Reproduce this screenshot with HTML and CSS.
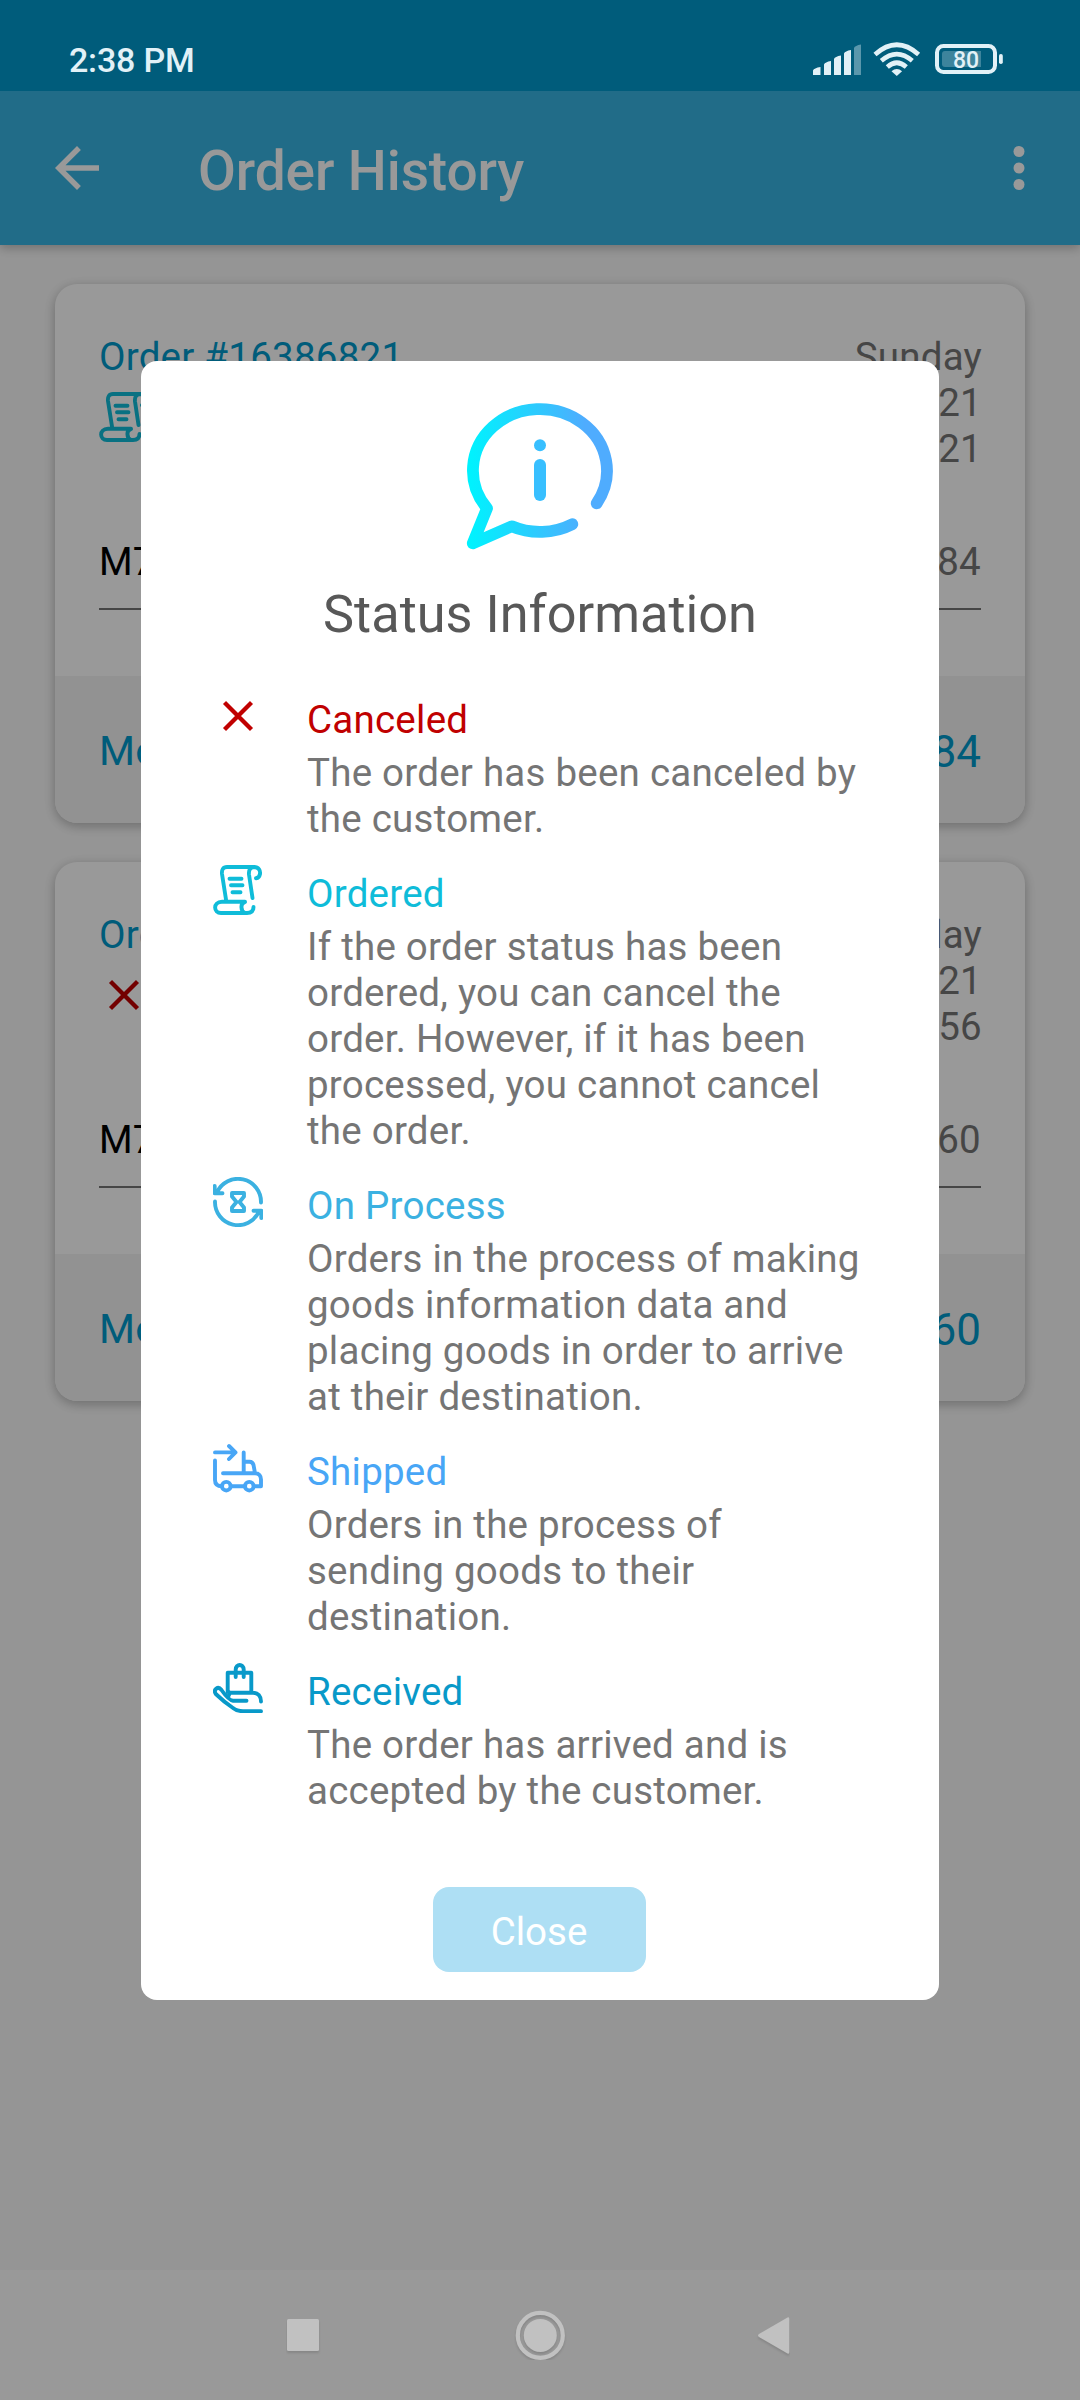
FILE: index.html
```html
<!DOCTYPE html>
<html lang="en">
<head>
<meta charset="utf-8">
<title>Order History</title>
<link rel="stylesheet" href="styles.css">
</head>
<body>
<svg class="defs" width="0" height="0" aria-hidden="true">
  <symbol id="cross" viewBox="0 0 50 50">
    <path stroke-linecap="butt" stroke-width="4.300" d="M11.500 11.500L38.500 38.500M38.500 11.500L11.500 38.500"/>
  </symbol>
  <symbol id="scroll" viewBox="0 0 50 50">
    <path d="M13 34.500L9 9C8.500 5 10 2 14 2H41C46 2 47.500 6 47 9C46.500 11.500 45 13 43 13.300M42 2C37 2 35.500 5 36 9.500L39.500 33M16.500 13.700H28.500M18 20.300H29.500M19.500 27.300H27.500M32 36.800H9C-.500 37 .500 48 8 48H34C38.500 48 40.500 46 40.500 42M32 37C27 38 27.500 46 32 48"/>
  </symbol>
  <symbol id="process" viewBox="0 0 50 50">
    <path d="M4 15.500A23 23 0 0 1 48 25.500M1.700 9V16.300H9.500M2 24.500A23 23 0 0 0 46 34.500M48.300 41V33.700H40.500M19 16H31V19.500L26.500 25L31 30.500V34H19V30.500L23.500 25L19 19.500Z"/>
  </symbol>
  <symbol id="truck" viewBox="0 0 50 50">
    <path d="M2 9.400H22M16 3L22.500 9.400L16 16M2 17.500V37C2 41 4 43.200 9 43.200M30.700 9.500V30M31 18.700H36.500C39 18.700 40 20 40.500 22L42 30M10 30.300H42C46 30.300 48 33 48 36.500V43.200H41.500M18 43.200H32"/>
    <circle cx="13.300" cy="43.200" r="4.300"/><circle cx="36.300" cy="43.200" r="4.300"/>
  </symbol>
  <symbol id="received" viewBox="0 0 50 50">
    <path d="M14.700 29V9.800H38.300V29M22.700 14V6.500C22.700 .500 30.700 .500 30.700 6.500V14M17 29.700H40C45 29.700 48 33 48 38.500M33.500 37.700H20C17 37.500 12 32 8.500 27C5 22.500 0 26.500 2.800 31C8 36 14 41 20 45C23 47.500 26 48.200 30 48.200H48M17 29.700L15 34"/>
  </symbol>
</svg>

<div class="screen">
  <header class="status-bar">
    <span class="clock">2:38 PM</span>
    <svg class="status-icons" width="194" height="36" viewBox="811 41 194 36">
      <g fill="#e2f1f7">
        <path d="M813 75V70.500Q814 68 820.500 67V75ZM824 75V64.500Q825 62 831 61V75ZM834 75V59Q835 56.500 841 55.500V75ZM844 75V53.500Q845 51 851 50V75Z"/>
        <path opacity=".4" d="M854 75V48Q855 45.500 861 44.500V75Z"/>
        <path d="M896.800 76L891.500 71.300Q896.800 66.500 902.100 71.300Z"/>
      </g>
      <g fill="none" stroke="#e2f1f7" stroke-width="4.600">
        <path d="M875 54.500Q896.800 35 918.600 54.500M881.300 60.800Q896.800 47.500 912.300 60.800M887.300 67Q896.800 58.500 906.300 67"/>
        <rect x="937" y="46" width="58" height="26" rx="6.500" stroke-width="4"/>
      </g>
      <rect x="999" y="54" width="3.800" height="10" rx="1.800" fill="#e2f1f7"/>
      <path d="M945 51H981V67H945Q942 67 942 64V54Q942 51 945 51Z" fill="#e2f1f7" opacity=".27"/>
      <text class="battery-level" x="966" y="68.200">80</text>
    </svg>
  </header>

  <div class="app-bar">
    <svg class="bar-icon" viewBox="0 0 24 24"><path d="M20 11H7.830l5.590-5.590L12 4l-8 8 8 8 1.410-1.410L7.830 13H20z"/></svg>
    <h1>Order History</h1>
    <svg class="bar-icon" viewBox="0 0 24 24"><circle cx="12" cy="6" r="2"/><circle cx="12" cy="12" r="2"/><circle cx="12" cy="18" r="2"/></svg>
  </div>

  <main class="orders">
    <article class="card">
      <div class="card-body">
        <div class="card-head">
          <div><div class="order-no">Order #16386821</div><svg class="icon ordered"><use href="#scroll"/></svg></div>
          <div class="date">Sunday<br>21<br>21</div>
        </div>
        <div class="item"><span class="sku">M7</span><span>84</span></div>
      </div>
      <footer class="card-foot"><span>Mo</span><span class="total">84</span></footer>
    </article>
    <article class="card">
      <div class="card-body">
        <div class="card-head">
          <div><div class="order-no">Ord</div><svg class="icon canceled"><use href="#cross"/></svg></div>
          <div class="date">day<br>21<br>56</div>
        </div>
        <div class="item"><span class="sku">M7</span><span>60</span></div>
      </div>
      <footer class="card-foot"><span>Mo</span><span class="total">60</span></footer>
    </article>
  </main>

  <nav class="nav-bar">
    <svg width="504" height="50" viewBox="286 2310 504 50">
      <g class="nav-shapes">
        <rect x="287" y="2319" width="32" height="32" rx="1.500"/>
        <circle cx="540.300" cy="2335.400" r="16.500"/>
        <circle cx="540.300" cy="2335.400" r="22.500" fill="none" stroke="#c1c1c1" stroke-width="4.200"/>
        <path d="M787.500 2317.500Q789.300 2316.500 789.300 2319V2352Q789.300 2354.500 787.500 2353.500L759 2337Q757 2335.500 759 2334Z"/>
      </g>
    </svg>
  </nav>

  <div class="scrim">
    <section class="dialog">
      <svg class="info" viewBox="0 0 146 146">
        <defs><linearGradient id="glow" gradientUnits="userSpaceOnUse" x1="4" y1="0" x2="118" y2="0"><stop offset="0" stop-color="#00f2fe"/><stop offset="1" stop-color="#4facfe"/></linearGradient></defs>
        <path d="M105.300 121.200A67 61.500 0 0 1 44.700 123.300L5.800 140.300L20 105.300A67 61.500 0 1 1 129.700 100.300" fill="none" stroke="url(#glow)" stroke-width="11.800" stroke-linecap="round" stroke-linejoin="round"/>
        <circle cx="73" cy="42.300" r="6" fill="#38bfff"/>
        <rect x="67" y="56" width="12" height="42" rx="6" fill="#38bfff"/>
      </svg>
      <h2>Status Information</h2>
      <ul class="statuses">
        <li class="canceled"><svg class="icon"><use href="#cross"/></svg><div><h3>Canceled</h3><p>The order has been canceled by the customer.</p></div></li>
        <li class="ordered"><svg class="icon"><use href="#scroll"/></svg><div><h3>Ordered</h3><p>If the order status has been ordered, you can cancel the order. However, if it has been processed, you cannot cancel the order.</p></div></li>
        <li class="processing"><svg class="icon"><use href="#process"/></svg><div><h3>On Process</h3><p>Orders in the process of making goods information data and placing goods in order to arrive at their destination.</p></div></li>
        <li class="shipped"><svg class="icon"><use href="#truck"/></svg><div><h3>Shipped</h3><p>Orders in the process of sending goods to their destination.</p></div></li>
        <li class="received"><svg class="icon"><use href="#received"/></svg><div><h3>Received</h3><p>The order has arrived and is accepted by the customer.</p></div></li>
      </ul>
      <button class="close" type="button">Close</button>
    </section>
  </div>
</div>
</body>
</html>
```
FILE: styles.css
```css
* { box-sizing: border-box; margin: 0; padding: 0; }

body {
  width: 1080px;
  font-family: Roboto, sans-serif;
  font-size: 38.5px;
  line-height: 46px;
  letter-spacing: .24px;
  color: #757575;
}

.defs { position: absolute; }

.screen {
  position: relative;
  display: flex;
  flex-direction: column;
  height: 2400px;
  overflow: hidden;
  background: #f9f9f9;
}

/* system bars sit above the scrim */
.status-bar {
  position: relative;
  z-index: 2;
  display: flex;
  justify-content: space-between;
  height: 91px;
  padding: 41px 75px 0 69px;
  background: #005c7b;
}
.clock {
  font-size: 34px;
  font-weight: 500;
  line-height: 38px;
  letter-spacing: -.2px;
  color: #e2f1f7;
}
.battery-level {
  font-size: 23px;
  font-weight: 500;
  letter-spacing: 0;
  text-anchor: middle;
  fill: #e2f1f7;
}

.app-bar {
  display: flex;
  align-items: center;
  height: 154px;
  padding: 0 28px 0 44px;
  background: #37b4e3;
  box-shadow: 0 3px 10px rgba(0, 0, 0, .25);
  z-index: 0;
}
.bar-icon { width: 66px; height: 66px; fill: #fff; }
.app-bar h1 {
  flex: 1;
  margin-left: 88px;
  padding-top: 5px;
  font-size: 55px;
  font-weight: 500;
  line-height: 66px;
  letter-spacing: -.1px;
  color: #fff;
}

.orders {
  flex: 1;
  display: flex;
  flex-direction: column;
  gap: 39px;
  padding: 39px 55px 0;
}
.card {
  height: 539px;
  border-radius: 22px;
  overflow: hidden;
  background: #fff;
  box-shadow: 0 3px 12px rgba(0, 0, 0, .28);
}
.card-body { height: 392px; padding: 50px 44px 0; }
.card-head { display: flex; justify-content: space-between; height: 205px; }
.order-no { color: #0099cc; }
.card-head .icon { margin-top: 12px; }
.date { margin-right: -1px; text-align: right; }
.item {
  display: flex;
  justify-content: space-between;
  height: 71px;
  border-bottom: 2px solid #757575;
}
.sku { color: #000; }
.card-foot {
  display: flex;
  align-items: center;
  justify-content: space-between;
  height: 147px;
  padding: 3px 44px 0;
  background: #f3f3f3;
  font-size: 41.25px;
  color: #0099cc;
}
.total { padding-top: 1px; font-size: 44px; letter-spacing: 0; }

.icon {
  display: block;
  flex: none;
  width: 50px;
  height: 50px;
  fill: none;
  stroke: currentColor;
  stroke-width: 3.9px;
  stroke-linecap: round;
  stroke-linejoin: round;
}
.canceled { color: #c00000; }
.ordered { color: #0fbcd9; }
.processing { color: #3bb1e1; }
.shipped { color: #48a6f6; }
.received { color: #0899c9; }

.nav-bar {
  position: relative;
  z-index: 2;
  display: flex;
  justify-content: center;
  height: 130px;
  padding-top: 40px;
  background: #999;
}
.nav-bar svg { margin-right: 4px; }
.nav-shapes { fill: #c1c1c1; filter: drop-shadow(0 2px 1px rgba(0, 0, 0, .12)); }

.scrim {
  position: absolute;
  inset: 0;
  z-index: 1;
  display: flex;
  justify-content: center;
  align-items: flex-start;
  padding-top: 361px;
  background: rgba(0, 0, 0, .4);
}
.dialog {
  display: flex;
  flex-direction: column;
  align-items: center;
  width: 798px;
  height: 1639px;
  padding: 42px 72px 28px;
  border-radius: 16px;
  background: #fff;
}
.info { width: 146px; height: 146px; overflow: visible; }
.dialog h2 {
  margin-top: 35px;
  font-size: 52.25px;
  font-weight: 400;
  line-height: 62px;
  letter-spacing: 0;
  color: #585858;
}
.statuses { align-self: stretch; margin-top: 51px; list-style: none; }
.statuses li { display: flex; gap: 44px; margin-bottom: 29px; }
.statuses .icon { margin-top: -6px; }
.statuses li > div { flex: 1; }
.statuses h3 { font-size: 38.5px; font-weight: 400; }
.statuses p { margin-top: 7px; color: #757575; }
.close {
  width: 213px;
  height: 85px;
  margin: auto 2px 0 0;
  padding-top: 4px;
  border: 0;
  border-radius: 16px;
  background: #aedff4;
  font: inherit;
  letter-spacing: 0;
  color: #fff;
}
```
